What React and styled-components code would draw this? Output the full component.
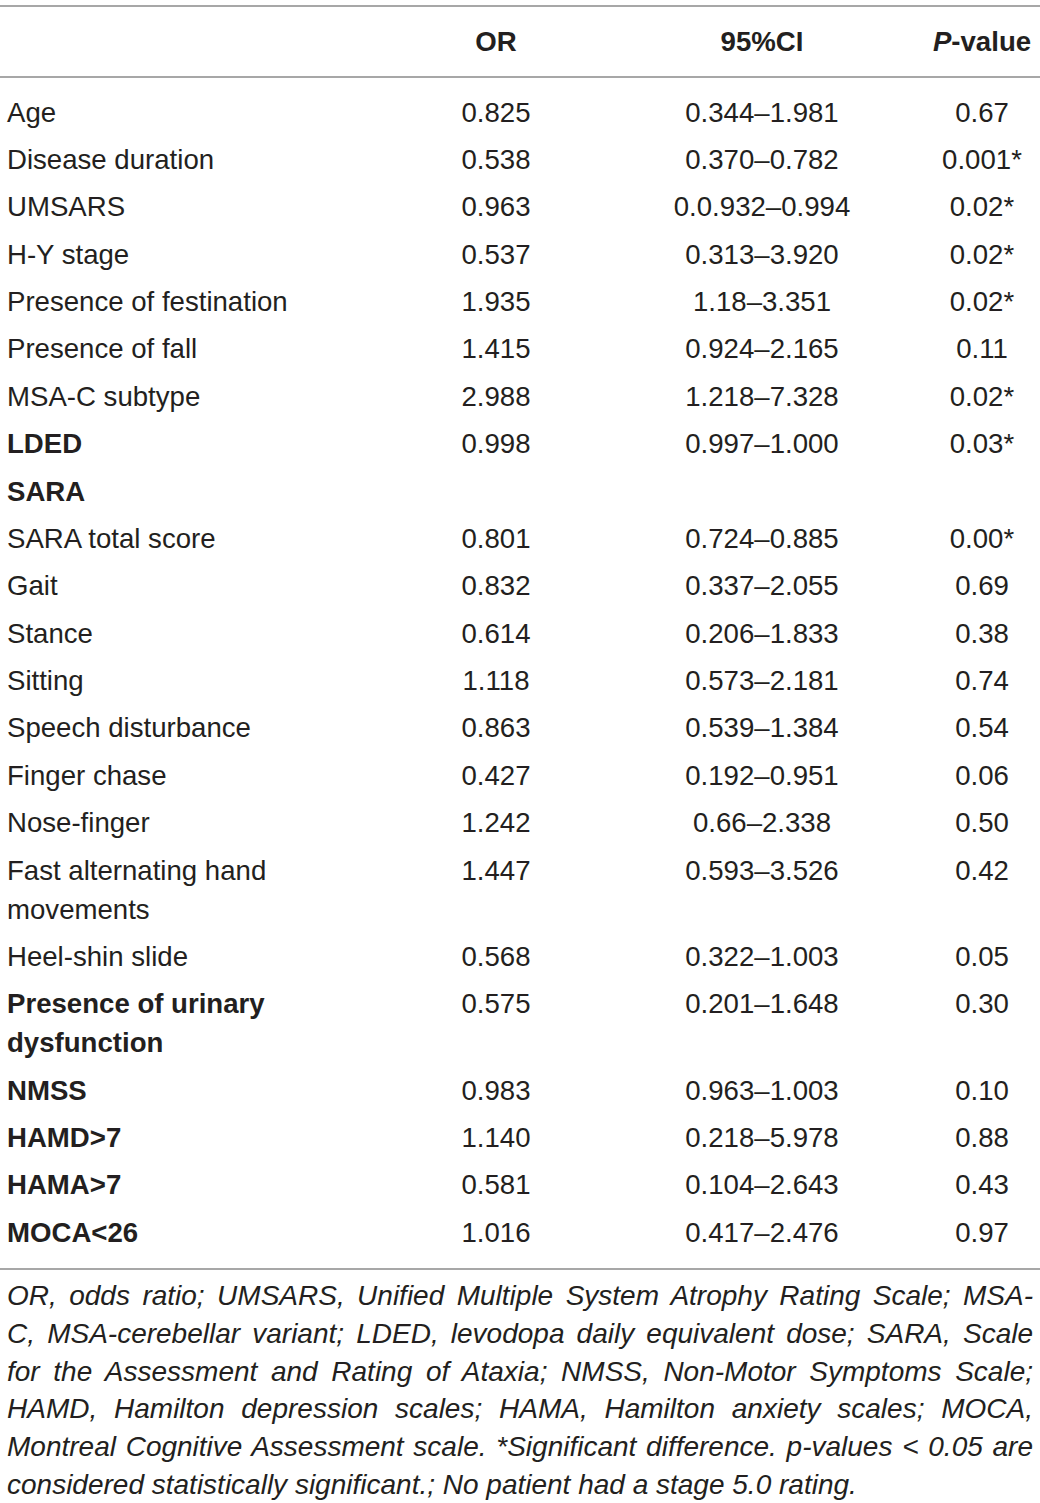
import React from "react";
import styled, {createGlobalStyle} from "styled-components";

const GlobalStyle = createGlobalStyle`
  body {
    margin: 0;
    background: #fff;
    font-family: "Liberation Sans", Arial, sans-serif;
    color: #231f20;
  }
`;

const Page = styled.div`
  width: 1040px;
  padding-top: 5px;
`;

const Table = styled.table`
  width: 1040px;
  border-collapse: collapse;
  table-layout: fixed;
  font-size: 27.6px;
  line-height: 39px;
  border-top: 2px solid #a7a7a7;
`;

const HeadCell = styled.th`
  padding: 15px 7px;
  font-weight: bold;
  text-align: ${p => (p.left ? "left" : "center")};
  border-bottom: 2px solid #a7a7a7;
`;

const Body = styled.tbody`
  tr:first-child td {
    padding-top: 14.5px;
  }
  tr:last-child td {
    padding-bottom: 16.5px;
  }
`;

const Row = styled.tr`
  border-bottom: ${p => (p.last ? "2px solid #a7a7a7" : "none")};
`;

const Cell = styled.td`
  padding: 4.2px 7px;
  vertical-align: top;
  text-align: ${p => (p.left ? "left" : "center")};
  font-weight: ${p => (p.bold ? "bold" : "normal")};
`;

const Note = styled.div`
  padding: 7px 7px 0;
  font-size: 28px;
  line-height: 37.7px;
  font-style: italic;
`;

const NoteLine = styled.span`
  display: block;
  white-space: nowrap;
  text-align: ${p => (p.last ? "left" : "justify")};
  text-align-last: ${p => (p.last ? "left" : "justify")};
`;

const rows = [
  ["Age", "0.825", "0.344–1.981", "0.67"],
  ["Disease duration", "0.538", "0.370–0.782", "0.001*"],
  ["UMSARS", "0.963", "0.0.932–0.994", "0.02*"],
  ["H-Y stage", "0.537", "0.313–3.920", "0.02*"],
  ["Presence of festination", "1.935", "1.18–3.351", "0.02*"],
  ["Presence of fall", "1.415", "0.924–2.165", "0.11"],
  ["MSA-C subtype", "2.988", "1.218–7.328", "0.02*"],
  ["LDED", "0.998", "0.997–1.000", "0.03*", true],
  ["SARA", "", "", "", true],
  ["SARA total score", "0.801", "0.724–0.885", "0.00*"],
  ["Gait", "0.832", "0.337–2.055", "0.69"],
  ["Stance", "0.614", "0.206–1.833", "0.38"],
  ["Sitting", "1.118", "0.573–2.181", "0.74"],
  ["Speech disturbance", "0.863", "0.539–1.384", "0.54"],
  ["Finger chase", "0.427", "0.192–0.951", "0.06"],
  ["Nose-finger", "1.242", "0.66–2.338", "0.50"],
  ["Fast alternating hand movements", "1.447", "0.593–3.526", "0.42"],
  ["Heel-shin slide", "0.568", "0.322–1.003", "0.05"],
  ["Presence of urinary dysfunction", "0.575", "0.201–1.648", "0.30", true],
  ["NMSS", "0.983", "0.963–1.003", "0.10", true],
  ["HAMD>7", "1.140", "0.218–5.978", "0.88", true],
  ["HAMA>7", "0.581", "0.104–2.643", "0.43", true],
  ["MOCA<26", "1.016", "0.417–2.476", "0.97", true],
];

// footnote lines, broken where the source breaks them
const note = [
  "OR, odds ratio; UMSARS, Unified Multiple System Atrophy Rating Scale; MSA-",
  "C, MSA-cerebellar variant; LDED, levodopa daily equivalent dose; SARA, Scale",
  "for the Assessment and Rating of Ataxia; NMSS, Non-Motor Symptoms Scale;",
  "HAMD, Hamilton depression scales; HAMA, Hamilton anxiety scales; MOCA,",
  "Montreal Cognitive Assessment scale. *Significant difference. p-values < 0.05 are",
  "considered statistically significant.; No patient had a stage 5.0 rating.",
];

export default function App() {
  return (
    <Page>
      <GlobalStyle/>
      <Table>
        <colgroup>
          <col style={{width: 388}}/>
          <col style={{width: 216}}/>
          <col style={{width: 316}}/>
          <col style={{width: 124}}/>
        </colgroup>
        <thead>
          <tr>
            <HeadCell left/>
            <HeadCell>OR</HeadCell>
            <HeadCell>95%CI</HeadCell>
            <HeadCell><i>P</i>-value</HeadCell>
          </tr>
        </thead>
        <Body>
          {rows.map(([label, or, ci, p, bold], i) => (
            <Row key={label} last={i === rows.length - 1}>
              <Cell left bold={bold}>{label}</Cell>
              <Cell>{or}</Cell>
              <Cell>{ci}</Cell>
              <Cell>{p}</Cell>
            </Row>
          ))}
        </Body>
      </Table>
      <Note>
        {note.map((line, i) => (
          <NoteLine key={i} last={i === note.length - 1}>{line}</NoteLine>
        ))}
      </Note>
    </Page>
  );
}
